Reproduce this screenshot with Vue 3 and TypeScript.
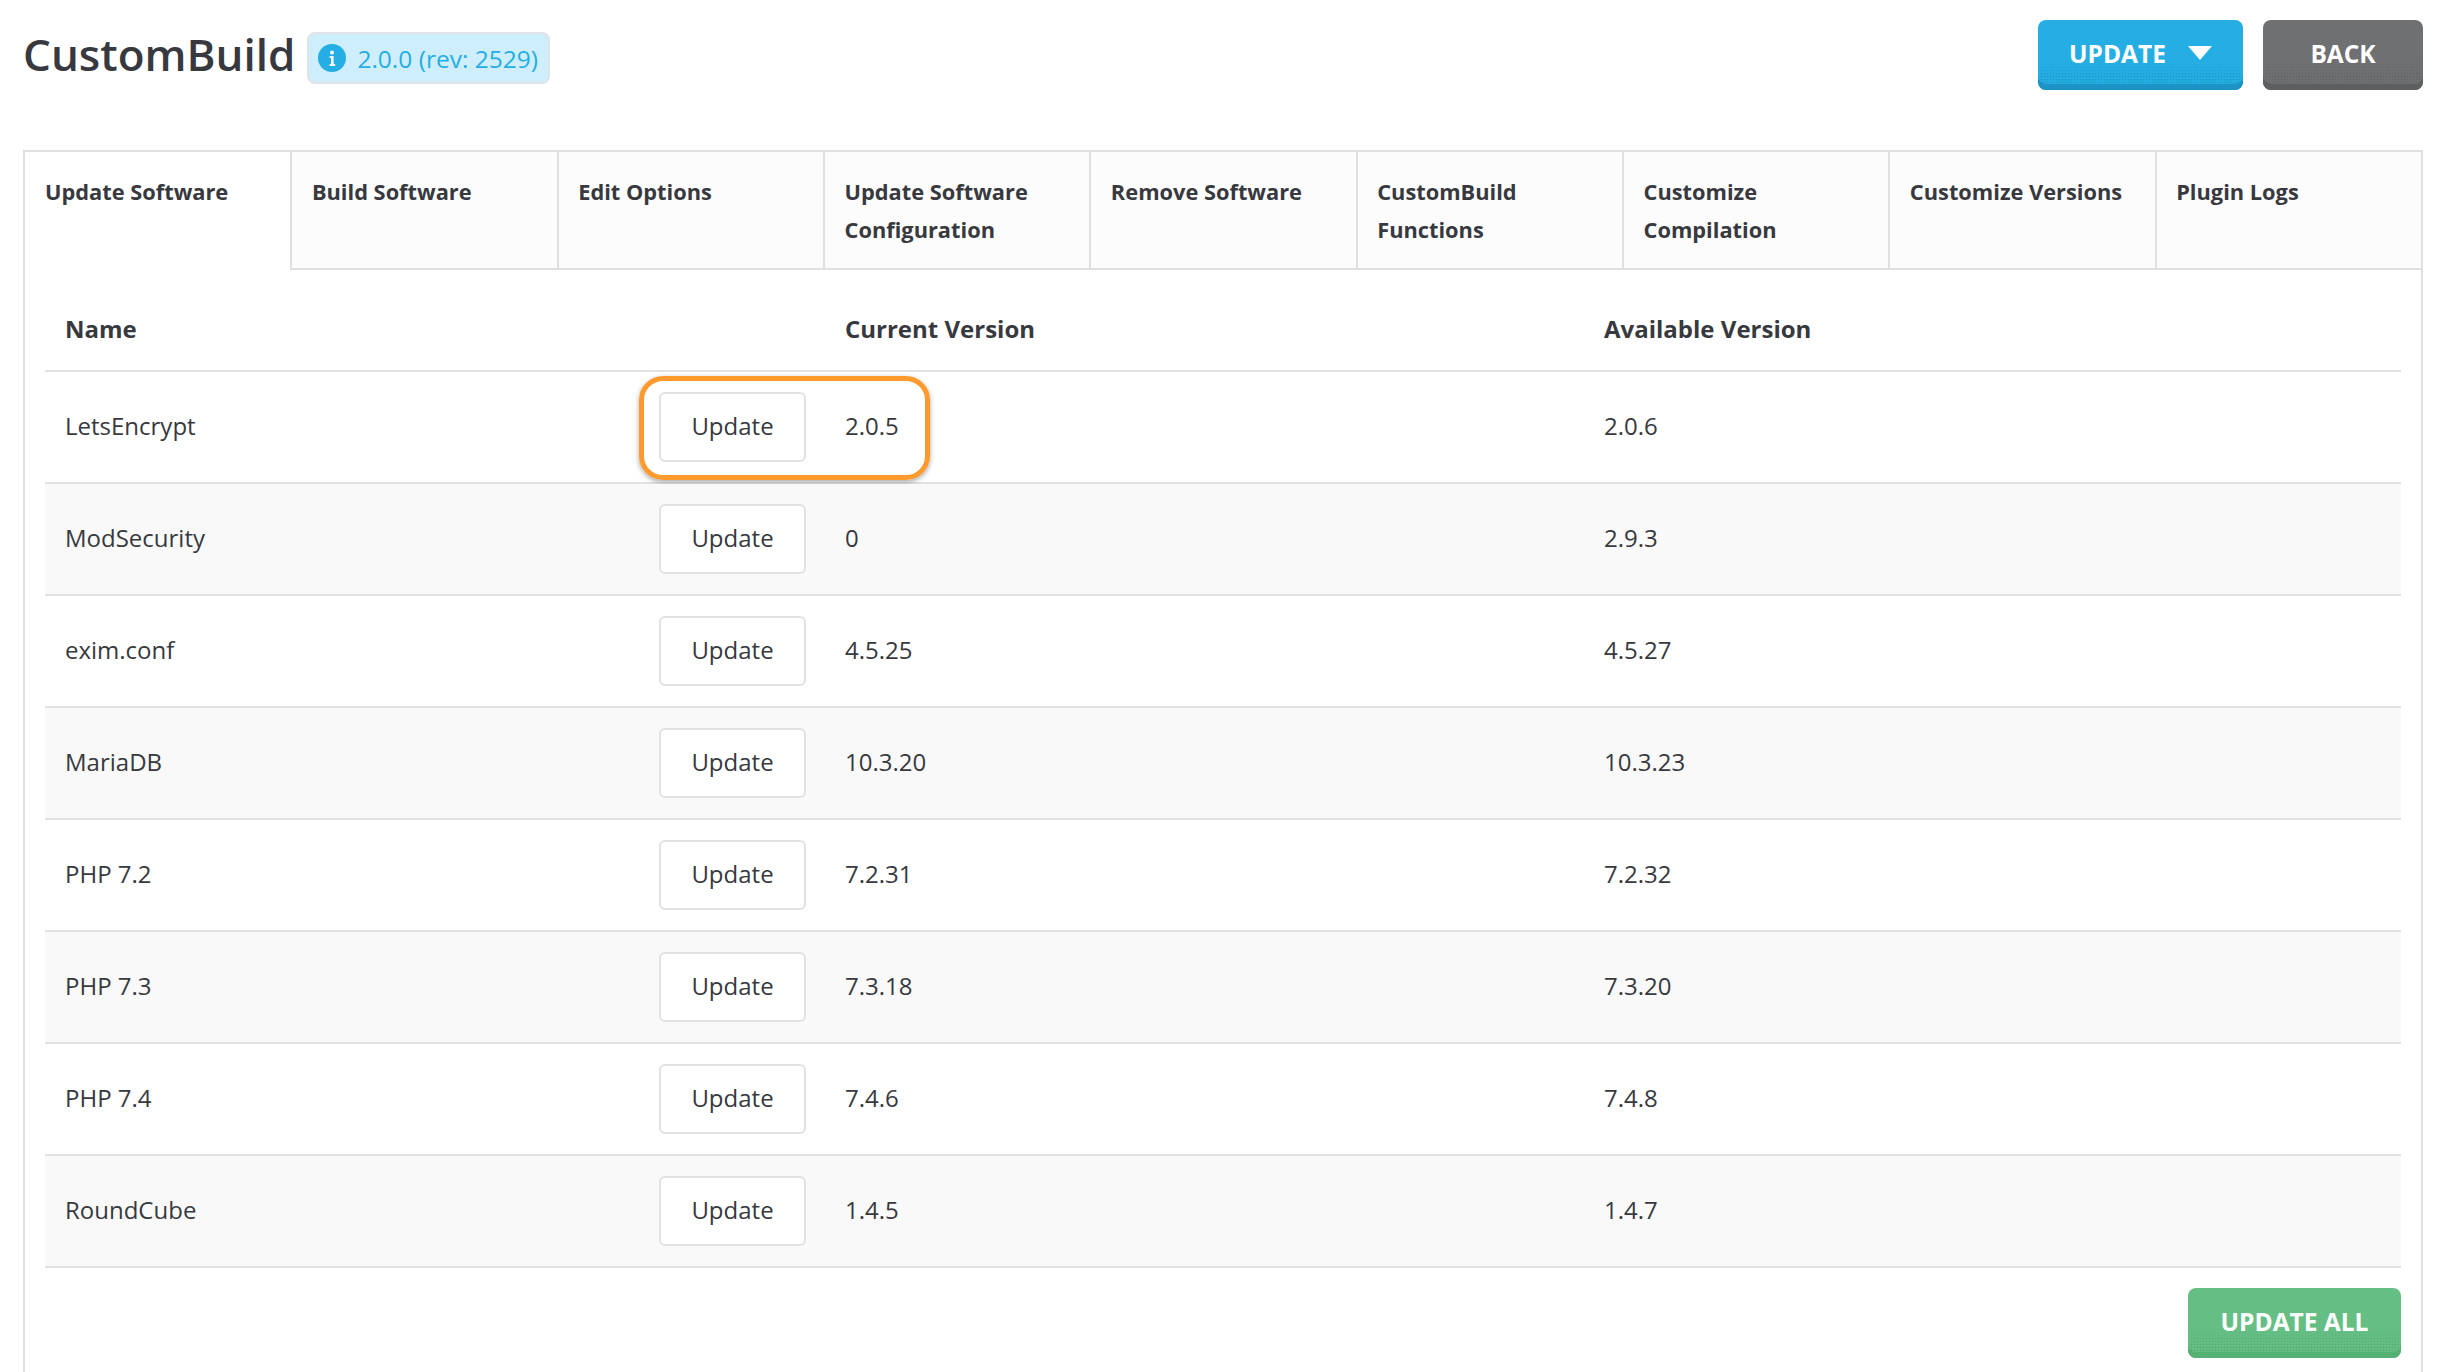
<script setup lang="ts">
interface Row { name: string; current: string; available: string }
const tabs: string[] = [
  'Update Software', 'Build Software', 'Edit Options', 'Update Software Configuration',
  'Remove Software', 'CustomBuild Functions', 'Customize Compilation', 'Customize Versions', 'Plugin Logs',
]
const rows: Row[] = [
  { name: 'LetsEncrypt', current: '2.0.5', available: '2.0.6' },
  { name: 'ModSecurity', current: '0', available: '2.9.3' },
  { name: 'exim.conf', current: '4.5.25', available: '4.5.27' },
  { name: 'MariaDB', current: '10.3.20', available: '10.3.23' },
  { name: 'PHP 7.2', current: '7.2.31', available: '7.2.32' },
  { name: 'PHP 7.3', current: '7.3.18', available: '7.3.20' },
  { name: 'PHP 7.4', current: '7.4.6', available: '7.4.8' },
  { name: 'RoundCube', current: '1.4.5', available: '1.4.7' },
]
</script>

<template>
  <div class="page">
    <header class="top">
      <div class="heading">
        <h1 class="title">CustomBuild</h1>
        <span class="badge">
          <svg class="info" viewBox="0 0 28 28" aria-hidden="true">
            <circle cx="14" cy="14" r="14" fill="#25aee4" />
            <path d="M11.6 12h4v8h1.6v2h-5.6v-2h1.4v-6h-1.4z" fill="#fff" />
            <circle cx="14" cy="8.4" r="2" fill="#fff" />
          </svg>
          <span>2.0.0 (rev: 2529)</span>
        </span>
      </div>
      <div class="actions">
        <button class="btn blue update">
          <span>UPDATE</span>
          <svg class="caret" viewBox="0 0 24 14" aria-hidden="true"><path d="M0 0H24L12 14Z" fill="#fff" /></svg>
        </button>
        <button class="btn gray back">BACK</button>
      </div>
    </header>

    <section class="panel">
      <nav class="tabs">
        <div v-for="(t, i) in tabs" :key="t" class="tab" :class="{ active: i === 0 }">{{ t }}</div>
      </nav>
      <div class="body">
        <div class="grid head">
          <div class="cell">Name</div>
          <div class="cell"></div>
          <div class="cell">Current Version</div>
          <div class="cell">Available Version</div>
        </div>
        <div v-for="(r, i) in rows" :key="r.name" class="grid row" :class="{ alt: i % 2 === 1 }">
          <div class="cell">{{ r.name }}</div>
          <div class="cell action"><button class="plain">Update</button></div>
          <div class="cell text">{{ r.current }}</div>
          <div class="cell text">{{ r.available }}</div>
          <div v-if="i === 0" class="highlight"></div>
        </div>
        <div class="foot">
          <button class="btn green all">UPDATE ALL</button>
        </div>
      </div>
    </section>
  </div>
</template>

<style>
html, body { margin: 0; background: #fff; overflow: hidden; }
</style>

<style scoped>
.page {
  width: 2440px;
  height: 1372px;
  box-sizing: border-box;
  padding: 0 17px 0 23px;
  overflow: hidden;
  font-family: "Open Sans", "Noto Sans", sans-serif;
  color: #37393e;
  font-size: 24px;
}
.top {
  height: 150px;
  display: flex;
  justify-content: space-between;
  align-items: flex-start;
}
.heading { display: flex; align-items: flex-start; gap: 12px; padding-top: 24px; }
.title { margin: 0; font-size: 44px; line-height: 60px; font-weight: 600; }
.badge {
  display: flex;
  align-items: center;
  gap: 11px;
  box-sizing: border-box;
  height: 52px;
  margin-top: 8px;
  padding: 0 10px 0 9px;
  background: #cfeefb;
  border: 2px solid #dfe3e5;
  border-radius: 8px;
  color: #25aee4;
  font-size: 24.5px;
}
.info { width: 28px; height: 28px; flex: none; }
.actions { display: flex; gap: 20px; padding-top: 20px; }
.btn {
  position: relative;
  box-sizing: border-box;
  height: 70px;
  border: 0;
  border-radius: 8px;
  color: #fff;
  font-family: inherit;
  font-size: 24.5px;
  font-weight: 700;
  padding: 0 0 4px;
  display: flex;
  align-items: center;
  justify-content: center;
}
.btn::after {
  content: "";
  position: absolute;
  left: 2px;
  right: 2px;
  bottom: 6px;
  height: 24px;
  background-image: radial-gradient(circle, rgba(0, 0, 0, 0.1) 0.8px, transparent 1.1px);
  background-size: 3px 3px;
  -webkit-mask-image: linear-gradient(to top, #000 30%, transparent);
  mask-image: linear-gradient(to top, #000 30%, transparent);
  pointer-events: none;
}
.btn > * { position: relative; z-index: 1; }
.blue { background: #25aee4; box-shadow: inset 0 -6px 0 #1c93c4; }
.gray { background: #6f7072; box-shadow: inset 0 -6px 0 #5d5e60; }
.green { background: #65bf84; box-shadow: inset 0 -6px 0 #55b073; }
.update { width: 205px; gap: 22px; }
.back { width: 160px; }
.all { width: 213px; }
.caret { width: 24px; height: 14px; flex: none; }

.panel {
  height: 1230px;
  box-sizing: border-box;
  border: 2px solid #e0e0e0;
  border-bottom: 0;
}
.tabs { display: grid; grid-template-columns: 265.4px repeat(8, 1fr); height: 118px; }
.tab {
  box-sizing: border-box;
  padding: 21px 19px 0 19.5px;
  background: #fcfcfc;
  border-bottom: 2px solid #e0e0e0;
  border-left: 2px solid #e0e0e0;
  font-size: 21.8px;
  line-height: 38px;
  font-weight: 700;
}
.tab.active { background: #fff; border-bottom-color: transparent; border-left: 0; padding-left: 20px; }
.body { padding: 0 20px; }
.grid {
  position: relative;
  display: grid;
  grid-template-columns: 594px 186px 759px 1fr;
  box-sizing: border-box;
  border-bottom: 2px solid #e2e2e2;
}
.cell { padding-left: 20px; display: flex; align-items: center; }
.head { height: 102px; font-weight: 700; }
.head .cell { padding-top: 17px; }
.row { height: 112px; background: #fff; }
.row.alt { background: #f9f9f9; }
.row .cell:not(.action) { padding-bottom: 3px; }
.plain {
  box-sizing: border-box;
  width: 147px;
  height: 70px;
  background: #fff;
  border: 2px solid #e2e2e2;
  border-radius: 6px;
  color: inherit;
  font: inherit;
  padding: 0 0 3px;
}
.highlight {
  position: absolute;
  left: 594px;
  top: 4px;
  width: 291px;
  height: 104px;
  box-sizing: border-box;
  border: 5px solid #ff9a2e;
  border-radius: 24px;
  box-shadow: 0 2px 5px rgba(0, 0, 0, 0.35);
  pointer-events: none;
}
.foot { display: flex; justify-content: flex-end; padding-top: 20px; }
</style>
